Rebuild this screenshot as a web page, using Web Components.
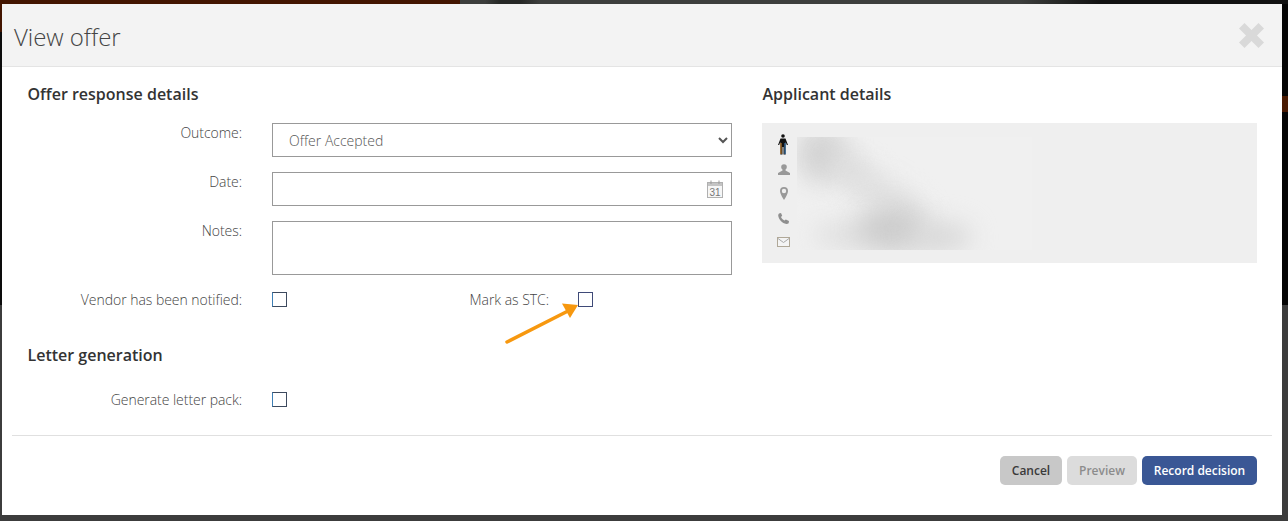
<!DOCTYPE html>
<html>
<head>
<meta charset="utf-8">
<title>View offer</title>
<style>
  html, body { margin: 0; height: 100%; }
  body { background: #3c3c3c; font-family: "Open Sans", sans-serif; overflow: hidden; }
</style>
</head>
<body>
<offer-backdrop>
  <offer-modal heading="View offer">
    <div slot="left">
      <section-title>Offer response details</section-title>
      <form-row label="Outcome:" style="margin-top:18px">
        <select-box value="Offer Accepted"></select-box>
      </form-row>
      <form-row label="Date:" style="margin-top:15px">
        <date-box></date-box>
      </form-row>
      <form-row label="Notes:" style="margin-top:15px">
        <notes-box></notes-box>
      </form-row>
      <check-line style="margin-top:17px"></check-line>
      <section-title style="margin-top:37px">Letter generation</section-title>
      <form-row label="Generate letter pack:" check style="margin-top:24px">
        <check-box></check-box>
      </form-row>
    </div>
    <div slot="right">
      <section-title>Applicant details</section-title>
      <applicant-panel style="margin-top:18px"></applicant-panel>
    </div>
    <action-button slot="actions" kind="cancel">Cancel</action-button>
    <action-button slot="actions" kind="disabled">Preview</action-button>
    <action-button slot="actions" kind="primary">Record decision</action-button>
  </offer-modal>
</offer-backdrop>

<script>
class OfferBackdrop extends HTMLElement {
  constructor() {
    super();
    this.attachShadow({ mode: 'open' }).innerHTML = `
      <style>
        :host { display: block; position: relative; width: 1288px; height: 521px; background: #3c3c3c; overflow: hidden; }
        .wrap { position: relative; padding: 4px 6px 6px 2px; height: 511px; }
        .top { position: absolute; left: 0; top: 0; height: 4px; }
        .side { position: absolute; }
      </style>
      <div class="top" style="width:460px;background:#431500"></div>
      <div class="top" style="left:460px;width:828px;background:linear-gradient(90deg,#3c3e3c 0,#3c3e3c 25px,#262826 40px,#262826 60px,#3c3e3c 80px,#3c3e3c 560px,#111 640px)"></div>
      <div class="side" style="left:0;top:4px;width:2px;height:28px;background:#431500"></div>
      <div class="side" style="left:0;top:32px;width:2px;height:273px;background:#0c0c0c"></div>
      <div class="side" style="right:0;top:4px;width:6px;height:301px;background:#050505"></div>
      <div class="side" style="right:0;top:96px;width:6px;height:16px;background:#4a1a02"></div>
      <div class="wrap"><slot></slot></div>`;
  }
}

class OfferModal extends HTMLElement {
  constructor() {
    super();
    this.attachShadow({ mode: 'open' }).innerHTML = `
      <style>
        :host { display: flex; flex-direction: column; height: 511px; background: #fff; color: #333; }
        header { display: flex; justify-content: space-between; align-items: center; box-sizing: border-box; height: 63px;
          padding: 0 18px 0 12px; background: #f3f3f3; border-bottom: 1px solid #e4e4e4; }
        h1 { margin: 4px 0 0; font: 300 24px/32px "Open Sans", sans-serif; color: #444; letter-spacing: -0.05px; }
        .close { width: 25px; height: 25px; display: block; }
        main { display: grid; grid-template-columns: 705px 495px; column-gap: 30px; padding: 16px 0 0 25px; height: 368px; box-sizing: border-box; }
        hr { margin: 0 10px; border: 0; border-top: 1px solid #e0e0e0; }
        footer { display: flex; justify-content: flex-end; gap: 5px; padding: 20px 25px 0 0; }
      </style>
      <header>
        <h1></h1>
        <svg class="close" viewBox="0 0 25 25"><path d="M5.500 0 12.500 7 19.500 0 25 5.500 18 12.500 25 19.500 19.500 25 12.500 18 5.500 25 0 19.500 7 12.500 0 5.500Z" fill="#d9d9d9"/></svg>
      </header>
      <main>
        <slot name="left"></slot>
        <slot name="right"></slot>
      </main>
      <hr>
      <footer><slot name="actions"></slot></footer>`;
  }
  connectedCallback() {
    this.shadowRoot.querySelector('h1').textContent = this.getAttribute('heading');
  }
}

class SectionTitle extends HTMLElement {
  constructor() {
    super();
    this.attachShadow({ mode: 'open' }).innerHTML = `
      <style>
        :host { display: block; padding-left: 0.5px; font: 600 16px/22px "Open Sans", sans-serif; color: #333; }
      </style>
      <slot></slot>`;
  }
}

class FormRow extends HTMLElement {
  constructor() {
    super();
    this.attachShadow({ mode: 'open' }).innerHTML = `
      <style>
        :host { display: grid; grid-template-columns: 215px 460px; column-gap: 30px; }
        label { text-align: right; font: 300 14px/19px "Open Sans", sans-serif; color: #444; letter-spacing: -0.04px; }
        :host([check]) { align-items: center; }
      </style>
      <label></label>
      <div><slot></slot></div>`;
  }
  connectedCallback() {
    this.shadowRoot.querySelector('label').textContent = this.getAttribute('label');
  }
}

class SelectBox extends HTMLElement {
  constructor() {
    super();
    this.attachShadow({ mode: 'open' }).innerHTML = `
      <style>
        :host { display: block; }
        select { display: block; width: 460px; height: 34px; box-sizing: border-box; padding: 0 0 0 12px; background: #fff;
          border: 1px solid #999; border-radius: 0; font: 300 14px "Open Sans", sans-serif; color: #555; outline: 0; }
      </style>
      <select></select>`;
  }
  connectedCallback() {
    const option = document.createElement('option');
    option.textContent = this.getAttribute('value');
    this.shadowRoot.querySelector('select').appendChild(option);
  }
}

class DateBox extends HTMLElement {
  constructor() {
    super();
    this.attachShadow({ mode: 'open' }).innerHTML = `
      <style>
        :host { display: flex; align-items: center; justify-content: flex-end; box-sizing: border-box; width: 460px; height: 34px;
          border: 1px solid #999; padding-right: 8px; background: #fff; }
        svg { display: block; }
        text { font: 400 10px "Liberation Sans", sans-serif; fill: #777; }
      </style>
      <svg width="16" height="18" viewBox="0 0 16 18">
        <rect x="0.500" y="2.500" width="15" height="15" fill="#f6f6f6" stroke="#b0b0b0"/>
        <rect x="1" y="3" width="14" height="3" fill="#c4c4c4"/>
        <path d="M4 0.500V4M12 0.500V4" stroke="#999" fill="none"/>
        <text x="2.500" y="15.500">31</text>
      </svg>`;
  }
}

class NotesBox extends HTMLElement {
  constructor() {
    super();
    this.attachShadow({ mode: 'open' }).innerHTML = `
      <style>
        :host { display: block; box-sizing: border-box; width: 460px; height: 54px; border: 1px solid #999; background: #fff; }
      </style>`;
  }
}

class CheckBox extends HTMLElement {
  constructor() {
    super();
    this.attachShadow({ mode: 'open' }).innerHTML = `
      <style>
        :host { display: block; flex: none; box-sizing: border-box; width: 15px; height: 15px; background: #fff;
          border: 1px solid #3d4a5e; border-left-color: #3d7fb5; }
        :host([marked]) { border-color: #3f4a78; }
      </style>`;
  }
}

// the two checkboxes on one line, with the arrow pointing at the second
class CheckLine extends HTMLElement {
  constructor() {
    super();
    this.attachShadow({ mode: 'open' }).innerHTML = `
      <style>
        :host { display: flex; position: relative; align-items: center; height: 15px; }
        span { flex: none; font: 300 14px/19px "Open Sans", sans-serif; color: #444; text-align: right; white-space: nowrap; letter-spacing: -0.04px; }
        .vendor { width: 215px; margin-right: 30px; }
        .stc { width: 262px; margin-right: 29px; }
        svg { position: absolute; left: 475px; top: 6px; }
      </style>
      <span class="vendor">Vendor has been notified:</span>
      <check-box></check-box>
      <span class="stc">Mark as STC:</span>
      <check-box marked></check-box>
      <svg width="80" height="46" viewBox="0 0 80 46">
        <path d="M5 44 66 13" stroke="#f7980f" stroke-width="3.500" stroke-linecap="round" fill="none"/>
        <path d="M76 7 60 5.500 68 20Z" fill="#f7980f"/>
      </svg>`;
  }
}

class ApplicantPanel extends HTMLElement {
  constructor() {
    super();
    this.attachShadow({ mode: 'open' }).innerHTML = `
      <style>
        :host { display: flex; box-sizing: border-box; width: 495px; height: 140px; background: #efefef; padding: 11px 0 0 15px; gap: 7px; }
        .icons { display: flex; flex-direction: column; align-items: center; width: 13px; }
        .icons svg { display: block; }
        .blur { position: relative; width: 235px; height: 113px; margin-top: 3px; overflow: hidden; background: #f0f0f0; }
        .blur i { position: absolute; display: block; border-radius: 50%; filter: blur(12px); background: #cfcfcf; }
      </style>
      <div class="icons">
        <svg width="10" height="21" viewBox="0 0 10 21" style="margin-left:-2px">
          <circle cx="5" cy="2" r="1.800" fill="#111"/>
          <path d="M2.500 4.500h5L10 11H8.800L7.700 8v12.500H5.500V13h-1v7.500H2.300V8L1.200 11H0Z" fill="#111"/>
          <path d="M3 9v11" stroke="#d98a2b"/><path d="M7 9v11" stroke="#3f87c8"/>
        </svg>
        <svg width="12" height="11" viewBox="0 0 12 11" style="margin-top:9px">
          <circle cx="6" cy="3" r="2.800" fill="#999"/>
          <path d="M4.500 5h3v1.500L12 9v2H0V9l4.500-2.500Z" fill="#999"/>
        </svg>
        <svg width="8" height="13" viewBox="0 0 8 13" style="margin-top:12px">
          <path d="M4 0a4 4 0 0 1 4 4c0 3-4 9-4 9S0 7 0 4a4 4 0 0 1 4-4Zm0 1.800a2.200 2.200 0 1 0 0 4.400 2.200 2.200 0 0 0 0-4.400Z" fill="#999"/>
        </svg>
        <svg width="11" height="11" viewBox="0 0 11 11" style="margin-top:13px">
          <path d="M1 .5 3 0l1.200 2.800L3 4c.6 1.500 1.700 2.800 3.500 3.500L7.800 6.400 11 8l-.3 2c-.4.700-1.500 1-2.300.9C4 10.300.8 6.600.2 2.500.2 1.800.4 1 1 .5Z" fill="#8f8f8f"/>
        </svg>
        <svg width="13" height="10" viewBox="0 0 13 10" style="margin-top:13px">
          <rect x="0.500" y="0.500" width="12" height="9" fill="#f4f4f4" stroke="#b0a898"/>
          <path d="M1 1.500 6.500 5.500 12 1.500" fill="none" stroke="#a8a8a8"/>
        </svg>
      </div>
      <div class="blur">
        <i style="left:0;top:-10px;width:50px;height:55px;background:#d2d2d2"></i>
        <i style="left:25px;top:20px;width:60px;height:30px;background:#dcdcdc;transform:rotate(35deg)"></i>
        <i style="left:50px;top:45px;width:80px;height:30px;background:#e0e0e0;transform:rotate(30deg)"></i>
        <i style="left:15px;top:85px;width:110px;height:26px;background:#dedede"></i>
        <i style="left:60px;top:70px;width:70px;height:42px;background:#cdcdcd"></i>
        <i style="left:110px;top:85px;width:65px;height:30px;background:#d8d8d8"></i>
      </div>`;
  }
}

class ActionButton extends HTMLElement {
  constructor() {
    super();
    this.attachShadow({ mode: 'open' }).innerHTML = `
      <style>
        :host { display: flex; align-items: center; justify-content: center; box-sizing: border-box; height: 29px;
          border-radius: 5px; font: 600 12px "Open Sans", sans-serif; }
        :host([kind="cancel"]) { width: 62px; background: #c8c8c8; color: #3a3a3a; }
        :host([kind="disabled"]) { width: 70px; background: #dcdcdc; color: #8c8c8c; }
        :host([kind="primary"]) { width: 115px; background: #3a5795; color: #fff; }
      </style>
      <slot></slot>`;
  }
}

customElements.define('offer-backdrop', OfferBackdrop);
customElements.define('offer-modal', OfferModal);
customElements.define('section-title', SectionTitle);
customElements.define('form-row', FormRow);
customElements.define('select-box', SelectBox);
customElements.define('date-box', DateBox);
customElements.define('notes-box', NotesBox);
customElements.define('check-box', CheckBox);
customElements.define('check-line', CheckLine);
customElements.define('applicant-panel', ApplicantPanel);
customElements.define('action-button', ActionButton);
</script>
</body>
</html>
